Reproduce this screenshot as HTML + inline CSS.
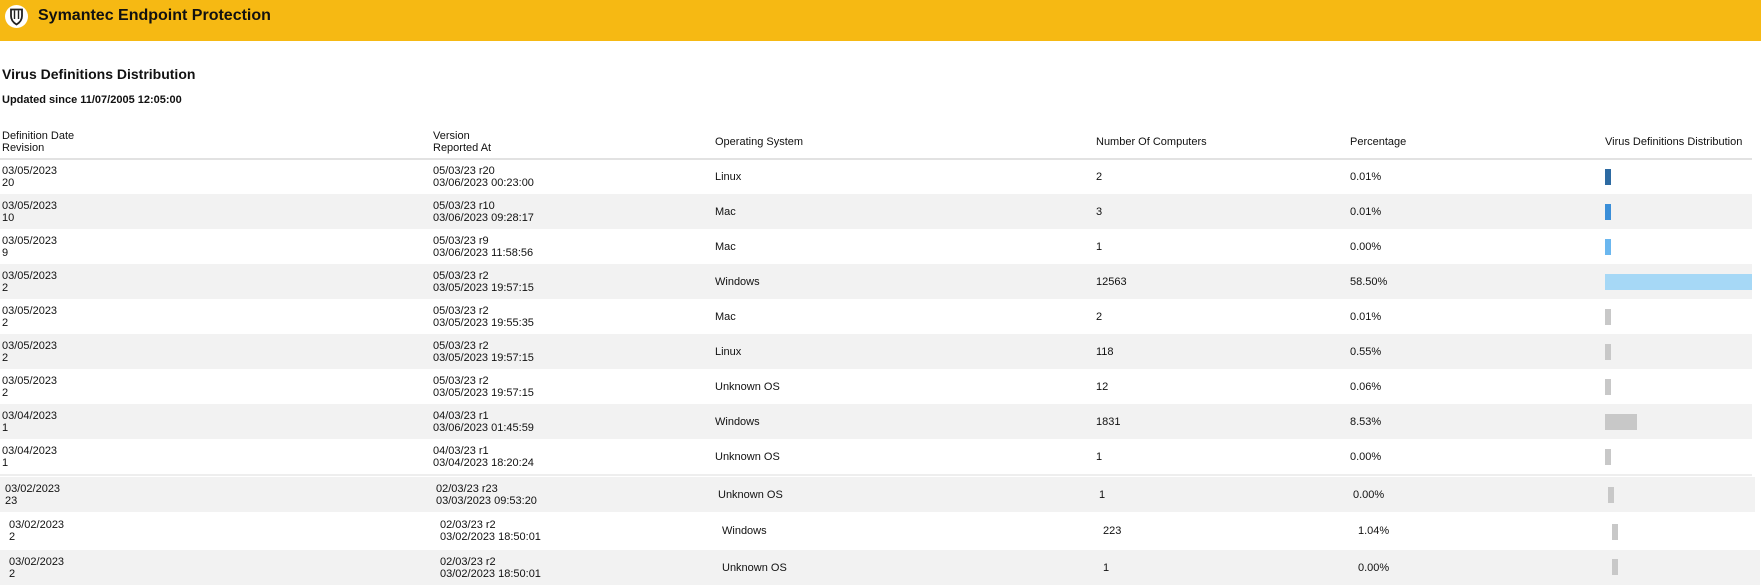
<!DOCTYPE html>
<html><head><meta charset="utf-8"><style>
*{margin:0;padding:0;box-sizing:border-box}
body{width:1761px;height:585px;overflow:hidden;background:#fff;font-family:"Liberation Sans",Arial,sans-serif;color:#111;position:relative}
.hdr{position:absolute;left:0;top:0;width:1761px;height:41px;background:#F6B913}
.logo{position:absolute;left:5px;top:5px;width:23px;height:23px;border-radius:50%;background:#fff}
.ht{position:absolute;left:38px;top:7px;font-size:16px;font-weight:bold;color:#111}
.t1{position:absolute;left:2px;top:66px;font-size:14px;font-weight:bold}
.t2{position:absolute;left:2px;top:94px;font-size:11px;font-weight:bold}
.th{position:absolute;top:130px;font-size:11px;line-height:12px}
.line{position:absolute;left:0;top:158px;width:1752px;height:2px;background:#e2e2e2}
.row{position:absolute;height:35px;width:1752px;font-size:11px;line-height:12px}
.row.g{background:#f2f2f2}
.c{position:absolute;top:50%;transform:translateY(-50%)}
.bar{position:absolute;top:10px;height:16px;width:6px;background:#c8c8c8}
</style></head><body>
<div class="hdr">
 <div class="logo"><svg width="23" height="23" viewBox="0 0 23 23"><path d="M6 4.5 H17 V11 C17 15.5 14 18 11.5 19.5 C9 18 6 15.5 6 11 Z" fill="none" stroke="#222" stroke-width="1.8"/><path d="M9.5 5.5 V14 M13.5 5.5 V14" stroke="#222" stroke-width="1.4"/></svg></div>
 <div class="ht">Symantec Endpoint Protection</div>
</div>
<div class="t1">Virus Definitions Distribution</div>
<div class="t2">Updated since 11/07/2005 12:05:00</div>
<div class="th" style="left:2px">Definition Date<br>Revision</div>
<div class="th" style="left:433px">Version<br>Reported At</div>
<div class="th" style="left:715px;top:136px">Operating System</div>
<div class="th" style="left:1096px;top:136px">Number Of Computers</div>
<div class="th" style="left:1350px;top:136px">Percentage</div>
<div class="th" style="left:1605px;top:136px">Virus Definitions Distribution</div>
<div class="line"></div>

<div class="row" style="top:159px;left:0"><div class="c" style="left:2px">03/05/2023<br>20</div><div class="c" style="left:433px">05/03/23 r20<br>03/06/2023 00:23:00</div><div class="c" style="left:715px">Linux</div><div class="c" style="left:1096px">2</div><div class="c" style="left:1350px">0.01%</div><div class="bar" style="left:1605px;background:#2D6AA2"></div></div>
<div class="row g" style="top:194px;left:0"><div class="c" style="left:2px">03/05/2023<br>10</div><div class="c" style="left:433px">05/03/23 r10<br>03/06/2023 09:28:17</div><div class="c" style="left:715px">Mac</div><div class="c" style="left:1096px">3</div><div class="c" style="left:1350px">0.01%</div><div class="bar" style="left:1605px;background:#3A8ED8"></div></div>
<div class="row" style="top:229px;left:0"><div class="c" style="left:2px">03/05/2023<br>9</div><div class="c" style="left:433px">05/03/23 r9<br>03/06/2023 11:58:56</div><div class="c" style="left:715px">Mac</div><div class="c" style="left:1096px">1</div><div class="c" style="left:1350px">0.00%</div><div class="bar" style="left:1605px;background:#6BB7EF"></div></div>
<div class="row g" style="top:264px;left:0"><div class="c" style="left:2px">03/05/2023<br>2</div><div class="c" style="left:433px">05/03/23 r2<br>03/05/2023 19:57:15</div><div class="c" style="left:715px">Windows</div><div class="c" style="left:1096px">12563</div><div class="c" style="left:1350px">58.50%</div><div class="bar" style="left:1605px;width:147px;background:#A6D8F6"></div></div>
<div class="row" style="top:299px;left:0"><div class="c" style="left:2px">03/05/2023<br>2</div><div class="c" style="left:433px">05/03/23 r2<br>03/05/2023 19:55:35</div><div class="c" style="left:715px">Mac</div><div class="c" style="left:1096px">2</div><div class="c" style="left:1350px">0.01%</div><div class="bar" style="left:1605px"></div></div>
<div class="row g" style="top:334px;left:0"><div class="c" style="left:2px">03/05/2023<br>2</div><div class="c" style="left:433px">05/03/23 r2<br>03/05/2023 19:57:15</div><div class="c" style="left:715px">Linux</div><div class="c" style="left:1096px">118</div><div class="c" style="left:1350px">0.55%</div><div class="bar" style="left:1605px"></div></div>
<div class="row" style="top:369px;left:0"><div class="c" style="left:2px">03/05/2023<br>2</div><div class="c" style="left:433px">05/03/23 r2<br>03/05/2023 19:57:15</div><div class="c" style="left:715px">Unknown OS</div><div class="c" style="left:1096px">12</div><div class="c" style="left:1350px">0.06%</div><div class="bar" style="left:1605px"></div></div>
<div class="row g" style="top:404px;left:0"><div class="c" style="left:2px">03/04/2023<br>1</div><div class="c" style="left:433px">04/03/23 r1<br>03/06/2023 01:45:59</div><div class="c" style="left:715px">Windows</div><div class="c" style="left:1096px">1831</div><div class="c" style="left:1350px">8.53%</div><div class="bar" style="left:1605px;width:32px"></div></div>
<div class="row" style="top:439px;left:0"><div class="c" style="left:2px">03/04/2023<br>1</div><div class="c" style="left:433px">04/03/23 r1<br>03/04/2023 18:20:24</div><div class="c" style="left:715px">Unknown OS</div><div class="c" style="left:1096px">1</div><div class="c" style="left:1350px">0.00%</div><div class="bar" style="left:1605px"></div></div>
<div style="position:absolute;left:0;top:474px;width:1752px;height:2px;background:#eee"></div>
<div class="row g" style="top:477px;left:0;width:1755px"><div class="c" style="left:5px">03/02/2023<br>23</div><div class="c" style="left:436px">02/03/23 r23<br>03/03/2023 09:53:20</div><div class="c" style="left:718px">Unknown OS</div><div class="c" style="left:1099px">1</div><div class="c" style="left:1353px">0.00%</div><div class="bar" style="left:1608px;top:10px"></div></div>
<div class="row" style="top:512px;left:0;height:38px;width:1760px"><div class="c" style="left:9px">03/02/2023<br>2</div><div class="c" style="left:440px">02/03/23 r2<br>03/02/2023 18:50:01</div><div class="c" style="left:722px">Windows</div><div class="c" style="left:1103px">223</div><div class="c" style="left:1358px">1.04%</div><div class="bar" style="left:1612px;top:12px"></div></div>
<div class="row g" style="top:550px;left:0;width:1760px"><div class="c" style="left:9px">03/02/2023<br>2</div><div class="c" style="left:440px">02/03/23 r2<br>03/02/2023 18:50:01</div><div class="c" style="left:722px">Unknown OS</div><div class="c" style="left:1103px">1</div><div class="c" style="left:1358px">0.00%</div><div class="bar" style="left:1612px;top:9px"></div></div>
</body></html>
